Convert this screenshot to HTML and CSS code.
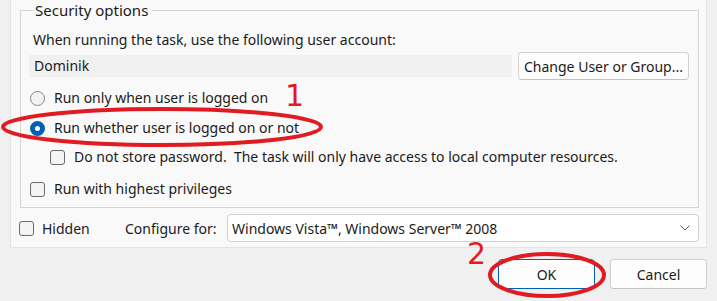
FILE: index.html
```html
<!DOCTYPE html>
<html lang="en">
<head>
    <meta charset="UTF-8">
    <title>Task Properties - Security options</title>
    <link rel="stylesheet" href="styles.css">
</head>
<body>
    <div class="panel">
        <fieldset class="group">
            <legend>Security options</legend>
            <div class="intro">When running the task, use the following user account:</div>
            <div class="user-row">
                <div class="user-field">Dominik</div>
                <button class="btn change-btn">Change User or Group...</button>
            </div>
            <div class="option first">
                <span class="radio"></span>
                <span>Run only when user is logged on</span>
            </div>
            <div class="option second">
                <span class="radio checked"></span>
                <span>Run whether user is logged on or not</span>
            </div>
            <div class="option sub">
                <span class="check"></span>
                <span>Do not store password.&nbsp; The task will only have access to local computer resources.</span>
            </div>
            <div class="option last">
                <span class="check"></span>
                <span>Run with highest privileges</span>
            </div>
        </fieldset>
        <div class="bottom-row">
            <div class="hidden-opt">
                <span class="check"></span>
                <span>Hidden</span>
            </div>
            <span class="config-label">Configure for:</span>
            <div class="select">
                <span>Windows Vista™, Windows Server™ 2008</span>
                <svg class="chevron" width="10" height="6" viewBox="0 0 10 6"><polyline points="0.5,0.5 5,5 9.5,0.5" fill="none" stroke="#5a5a5a" stroke-width="1"/></svg>
            </div>
        </div>
    </div>
    <div class="actions">
        <button class="btn default-btn">OK</button>
        <button class="btn">Cancel</button>
    </div>

    <!-- red annotation marks drawn over the dialog -->
    <svg class="marks" width="717" height="301" viewBox="0 0 717 301">
        <ellipse cx="162" cy="127" rx="159" ry="18" fill="none" stroke="#e01b22" stroke-width="4"/>
        <ellipse cx="547" cy="275" rx="57" ry="21" fill="none" stroke="#e01b22" stroke-width="4"/>
    </svg>
    <span class="mark-num num-one">1</span>
    <span class="mark-num num-two">2</span>
</body>
</html>
```

FILE: styles.css
```css
body {
    margin: 0;
    background: #f0f0f0;
    font-family: "Noto Sans", sans-serif;
    font-size: 14px;
    color: #1b1b1b;
    width: 717px;
    height: 301px;
    overflow: hidden;
    position: relative;
}
.panel {
    margin-left: 10px;
    width: 695px;
    height: 247px;
    background: #f9f9f9;
    border: 1px solid #e3e3e3;
    border-top: none;
    box-sizing: content-box;
}
.group {
    margin: 0 7px 0 9px;
    padding: 0 9px 8px 8px;
    border: 1px solid #d5d5d5;
    min-width: 0;
}
.group legend {
    padding: 0 4px 0 2px;
    margin-left: 4px;
    line-height: 20px;
    font-size: 15px;
}
.intro {
    margin-top: 10px;
    padding-left: 4px;
    line-height: 20px;
}
.user-row {
    display: flex;
    align-items: center;
    margin-top: 2px;
    height: 28px;
}
.user-field {
    width: 478px;
    height: 22px;
    line-height: 22px;
    background: #f0f0f0;
    padding-left: 5px;
}
.btn {
    font-family: "Noto Sans", sans-serif;
    font-size: 14px;
    color: #1b1b1b;
    background: #fdfdfd;
    border: 1px solid #d0d0d0;
    border-bottom-color: #c2c2c2;
    border-radius: 4px;
    height: 28px;
    padding: 0;
}
.change-btn {
    margin-left: 6px;
    width: 171px;
}
.option {
    display: flex;
    align-items: center;
    gap: 9px;
    height: 20px;
    line-height: 20px;
}
.option.first { margin-top: 8px; margin-left: 1px; }
.option.second { margin-top: 10px; margin-left: 1px; }
.option.sub { margin-top: 9px; margin-left: 21px; }
.option.last { margin-top: 12px; margin-left: 1px; }
.radio {
    width: 13px;
    height: 13px;
    border: 1px solid #858585;
    border-radius: 50%;
    background: #f3f3f3;
    flex-shrink: 0;
}
.radio.checked {
    width: 5px;
    height: 5px;
    border: 5px solid #005fb8;
    background: #ffffff;
}
.check {
    width: 13px;
    height: 13px;
    border: 1px solid #6a6a6a;
    border-radius: 3px;
    background: #f4f4f4;
    flex-shrink: 0;
}
.bottom-row {
    display: flex;
    align-items: center;
    margin: 6px 7px 0 9px;
    height: 28px;
}
.hidden-opt {
    display: flex;
    align-items: center;
    gap: 8px;
    width: 106px;
    margin-left: -1px;
}
.config-label {
    width: 102px;
}
.select {
    flex: 1;
    height: 26px;
    display: flex;
    align-items: center;
    justify-content: space-between;
    background: #ffffff;
    border: 1px solid #d0d0d0;
    border-radius: 4px;
    padding: 0 8px 0 4px;
}
.actions {
    display: flex;
    justify-content: flex-end;
    gap: 15px;
    margin-top: 11px;
    padding-right: 10px;
}
.actions .btn {
    width: 97px;
    height: 30px;
}
.default-btn {
    border: 1px solid #005fb8;
}
.marks {
    position: absolute;
    left: 0;
    top: 0;
    pointer-events: none;
}
.mark-num {
    position: absolute;
    color: #e01b22;
    font-family: "DejaVu Sans", sans-serif;
    font-size: 30px;
    line-height: 30px;
}
.num-one { left: 285px; top: 81px; }
.num-two { left: 467px; top: 239px; }
```
